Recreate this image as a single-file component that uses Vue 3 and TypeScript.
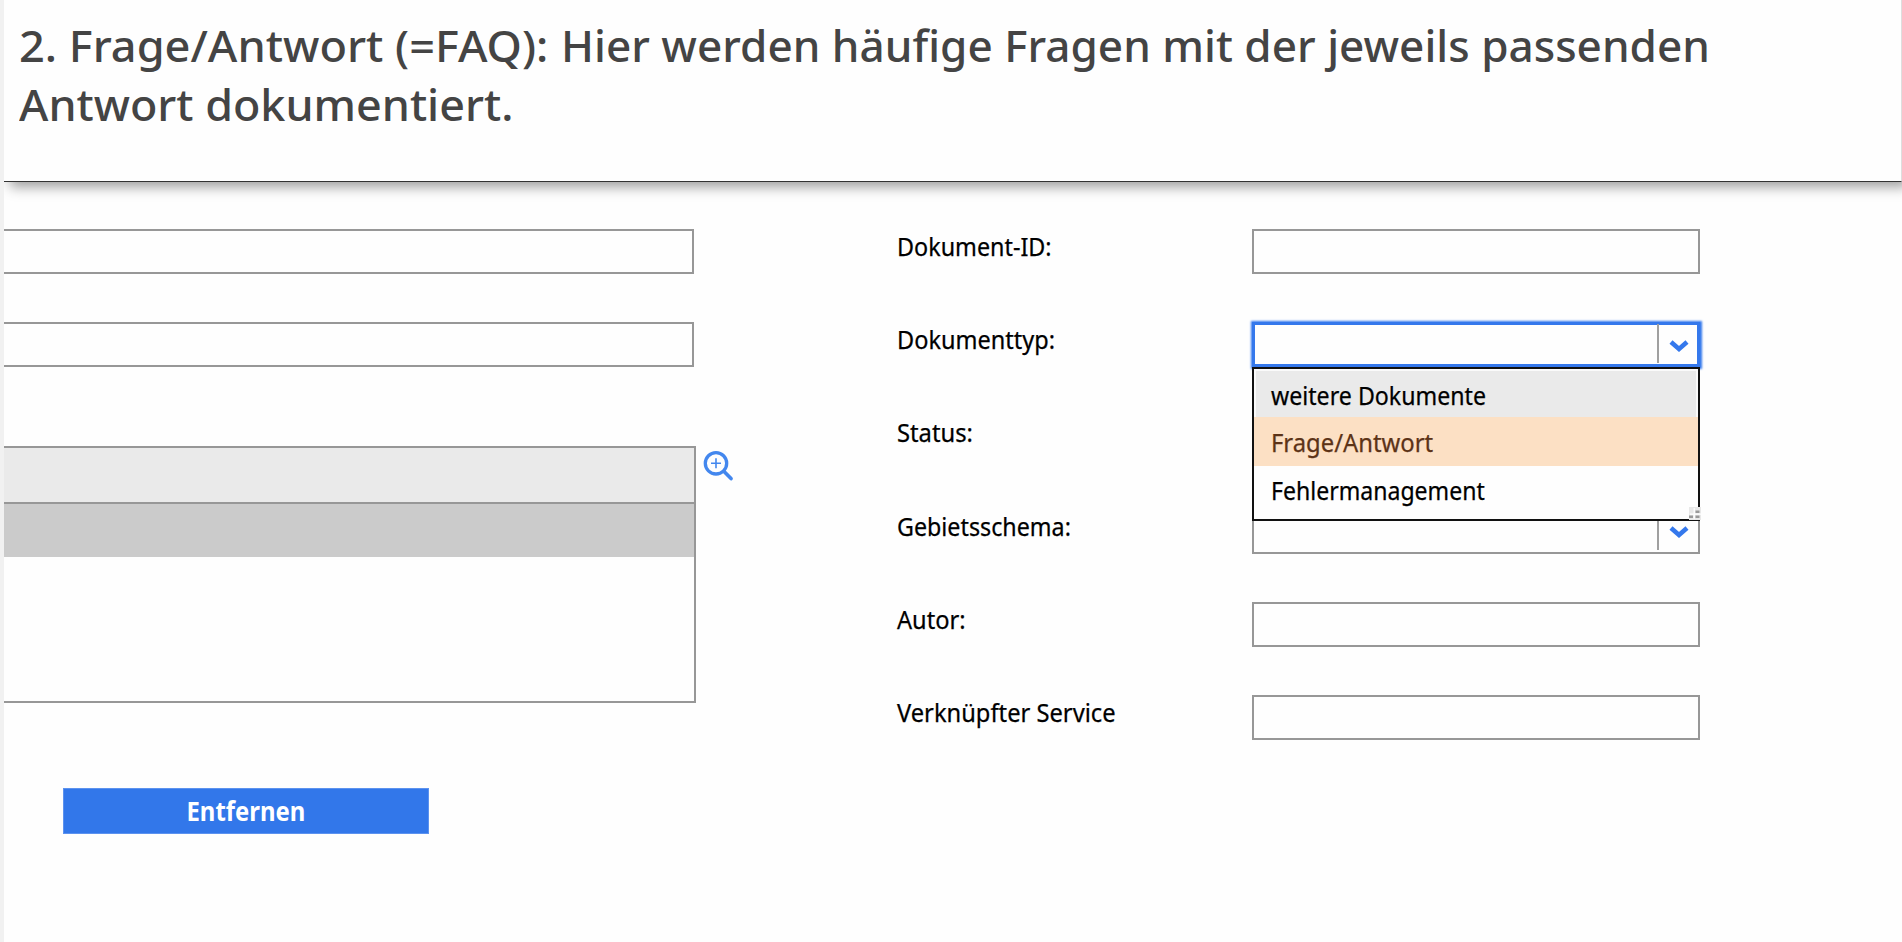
<script setup lang="ts">
import type { Directive } from 'vue'

interface Field {
  label: string
  width: number
  kind: 'text' | 'select' | 'none'
  open?: boolean
}

interface Option {
  label: string
  width: number
  state: string
}

const heading = [
  [
    { text: '2. Frage/Antwort (=FAQ):', width: 529 },
    { text: 'Hier werden häufige Fragen mit der jeweils passenden', width: 1149 },
  ],
  [{ text: 'Antwort dokumentiert.', width: 494 }],
]

const fields: Field[] = [
  { label: 'Dokument-ID:', width: 155, kind: 'text' },
  { label: 'Dokumenttyp:', width: 158, kind: 'select', open: true },
  { label: 'Status:', width: 76, kind: 'none' },
  { label: 'Gebietsschema:', width: 174, kind: 'select' },
  { label: 'Autor:', width: 69, kind: 'text' },
  { label: 'Verknüpfter Service', width: 219, kind: 'text' },
]

const options: Option[] = [
  { label: 'weitere Dokumente', width: 215, state: 'current' },
  { label: 'Frage/Antwort', width: 162, state: 'hovered' },
  { label: 'Fehlermanagement', width: 214, state: '' },
]

// Condenses or widens a line of text so that it fills the given width.
const vFit: Directive<HTMLElement, number> = {
  mounted(el, { value }) {
    const natural = el.offsetWidth
    el.style.transform = `scaleX(${value / natural})`
    if (!el.classList.contains('mid')) el.style.marginRight = `${value - natural}px`
  },
}
</script>

<template>
  <div class="page">
    <header class="banner">
      <h1>
        <span v-for="(line, i) in heading" :key="i" class="line">
          <span v-for="part in line" :key="part.text" v-fit="part.width" class="fit">{{ part.text }}</span>
        </span>
      </h1>
    </header>

    <main class="content">
      <section class="left">
        <div class="box wide"></div>
        <div class="box wide second"></div>
        <div class="list-row">
          <div class="list">
            <div class="list-head"></div>
            <div class="list-selected"></div>
          </div>
          <svg class="magnifier" width="32" height="32" viewBox="0 0 32 32" fill="none" stroke="#4387ee">
            <circle cx="14" cy="14.3" r="10.7" stroke-width="3.3" />
            <path d="M9 14.3h10M14 9.3v10" stroke-width="1.6" />
            <path d="M21.8 22.2l7.2 7.4" stroke-width="3.6" stroke-linecap="round" />
          </svg>
        </div>
        <button class="remove" type="button"><span v-fit="119" class="fit mid">Entfernen</span></button>
      </section>

      <section class="form">
        <div v-for="field in fields" :key="field.label" class="field">
          <label><span v-fit="field.width" class="fit">{{ field.label }}</span></label>
          <div v-if="field.kind !== 'none'" class="box" :class="{ focus: field.open }">
            <template v-if="field.kind === 'select'">
              <span class="divider"></span>
              <svg class="chevron" width="22" height="14" viewBox="0 0 22 14" fill="none">
                <path d="M3 3L11 9.9l8-6.9" stroke="#3478ec" stroke-width="4.6" />
              </svg>
            </template>
            <ul v-if="field.open" class="menu">
              <li v-for="option in options" :key="option.label" :class="option.state">
                <span v-fit="option.width" class="fit">{{ option.label }}</span>
              </li>
              <svg class="grip" width="12" height="13" viewBox="0 0 12 13">
                <rect width="12" height="13" fill="#e8e8e8" />
                <path d="M0 8.5h4V11H0zM6.5 3.5h4V6h-4zM6.5 8.5h4V11h-4z" fill="#999" />
                <path d="M5.2 1v11M1 7.2h11" stroke="#fff" stroke-width="1.2" />
              </svg>
            </ul>
          </div>
        </div>
      </section>
    </main>
  </div>
</template>

<style>
html,
body {
  margin: 0;
  background: #fff;
  overflow: hidden;
}
</style>

<style scoped>
* {
  box-sizing: border-box;
}

.page {
  width: 1902px;
  height: 942px;
  border-left: 4px solid #f1f1f1;
  background: #fefefe;
  overflow: hidden;
  font-family: 'Noto Sans', 'Open Sans', sans-serif;
}

.banner {
  height: 182px;
  padding: 16px 0 0 15px;
  background: #fefefe;
  border-right: 1px solid #dedede;
  border-bottom: 1px solid #333;
  box-shadow: 6px 5px 12px rgba(0, 0, 0, 0.38);
}

h1 {
  margin: 0;
  color: #444;
  font-size: 43.5px;
  font-weight: 500;
  line-height: 59.4px;
}

.line {
  display: flex;
  gap: 13px;
  white-space: nowrap;
}

.fit {
  display: inline-block;
  flex: none;
  white-space: nowrap;
  transform-origin: 0 50%;
}

.fit.mid {
  transform-origin: 50% 50%;
}

.content {
  display: flex;
  padding-top: 47px;
}

.left {
  width: 892px;
}

.box {
  position: relative;
  display: flex;
  align-items: center;
  justify-content: flex-end;
  width: 448px;
  height: 45px;
  border: 2px solid #979797;
  background: #fefefe;
}

.box.wide {
  width: 690px;
  border-left: 0;
}

.box.second {
  margin-top: 48px;
}

.list-row {
  display: flex;
  margin-top: 79px;
}

.list {
  width: 692px;
  height: 257px;
  border: 2px solid #979797;
  border-left: 0;
}

.list-head {
  height: 56px;
  border-bottom: 2px solid #979797;
  background: #eaeaea;
}

.list-selected {
  height: 53px;
  background: #cbcbcb;
}

.magnifier {
  margin: 3px 0 0 6px;
}

.remove {
  display: block;
  width: 366px;
  height: 46px;
  margin: 85px 0 0 59px;
  padding: 0;
  border: 1px solid #5c92ef;
  background: #3277ea;
  color: #fff;
  font: 700 26.5px/44px 'Noto Sans', sans-serif;
}

.field {
  display: flex;
  height: 93.2px;
}

label {
  width: 356px;
  padding-left: 1px;
  color: #000;
  font-size: 25px;
  line-height: 34px;
  -webkit-text-stroke: 0.25px #000;
}

.box.focus {
  z-index: 1;
  border-color: #3478ec;
  box-shadow: 0 0 2px 1.5px #3478ec, inset 0 0 0 1px #3478ec;
}

.divider {
  align-self: stretch;
  width: 2px;
  margin: 0 9px 2px 0;
  background: #a0a0a0;
}

.chevron {
  margin: 2px 8px 0 0;
}

.menu {
  position: absolute;
  top: 43px;
  left: -2px;
  width: 448px;
  height: 154px;
  margin: 0;
  padding: 0;
  border: 2px solid #111;
  background: #fefefe;
  color: #000;
  font-size: 25px;
  list-style: none;
  -webkit-text-stroke: 0.25px currentColor;
}

li {
  height: 49px;
  padding-left: 17px;
  line-height: 49px;
}

li.current {
  height: 48px;
  border: 1px solid #fafafa;
  border-width: 2px 2px 0 2px;
  padding-left: 15px;
  background: #eaeaea;
  line-height: 48px;
}

li.hovered {
  background: #fce0c4;
  color: #5c3317;
  line-height: 50px;
}

.grip {
  position: absolute;
  right: -3px;
  bottom: -1px;
}
</style>
